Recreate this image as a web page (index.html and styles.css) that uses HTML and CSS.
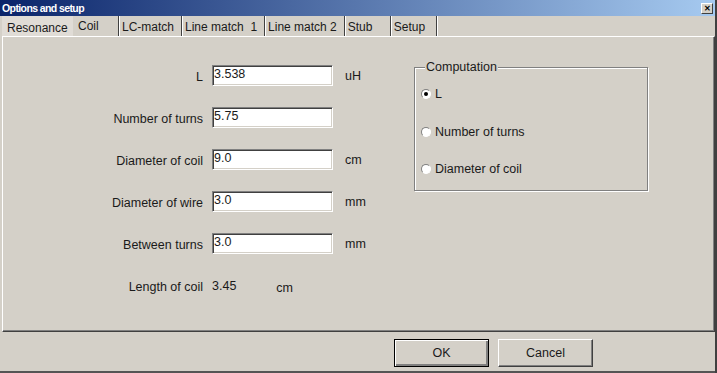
FILE: index.html
```html
<!DOCTYPE html>
<html lang="en">
	<head>
		<meta charset="UTF-8" />
		<title>Options and setup</title>
		<link rel="stylesheet" href="styles.css">
	</head>

	<body>
		<div class="window">
			<div class="titlebar">
				<span class="title">Options and setup</span>
				<span class="close">&#x2715;</span>
			</div>

			<div class="tabs">
				<div class="tab first">Resonance</div>
				<div class="tab active">Coil</div>
				<div class="tab">LC-match</div>
				<div class="tab">Line match&nbsp; 1</div>
				<div class="tab">Line match 2</div>
				<div class="tab">Stub</div>
				<div class="tab">Setup</div>
			</div>

			<div class="panel">
				<div class="form">
					<label class="label">L</label>
					<input class="field" type="text" value="3.538">
					<span class="unit">uH</span>

					<label class="label">Number of turns</label>
					<input class="field" type="text" value="5.75">
					<span class="unit"></span>

					<label class="label">Diameter of coil</label>
					<input class="field" type="text" value="9.0">
					<span class="unit">cm</span>

					<label class="label">Diameter of wire</label>
					<input class="field" type="text" value="3.0">
					<span class="unit">mm</span>

					<label class="label">Between turns</label>
					<input class="field" type="text" value="3.0">
					<span class="unit">mm</span>

					<label class="label">Length of coil</label>
					<div class="result">
						<span class="value">3.45</span>
						<span class="result-unit">cm</span>
					</div>
				</div>

				<fieldset class="group">
					<legend>Computation</legend>
					<div class="option"><span class="radio checked"></span>L</div>
					<div class="option"><span class="radio"></span>Number of turns</div>
					<div class="option"><span class="radio"></span>Diameter of coil</div>
				</fieldset>
			</div>

			<div class="footer">
				<button class="btn default">OK</button>
				<button class="btn">Cancel</button>
			</div>
		</div>
	</body>
</html>
```

FILE: styles.css
```css
    body {
      margin: 0;
      background-color: #d4d0c8;
      font-family: "Liberation Sans", Arial, sans-serif;
      font-size: 12.5px;
      color: #1a1a1a;
    }
    .window {
      width: 717px;
      height: 373px;
      display: flex;
      flex-direction: column;
      box-sizing: border-box;
      border-right: 2px solid #404040;
    }

    /* title bar */
    .titlebar {
      height: 16px;
      display: flex;
      align-items: center;
      justify-content: space-between;
      padding: 0 2px 0 2px;
      background: linear-gradient(to right, #0a246a, #a6caf0);
    }
    .title {
      color: white;
      font-weight: bold;
      font-size: 10.5px;
      letter-spacing: -0.6px;
    }
    .close {
      width: 12px;
      height: 11px;
      display: flex;
      align-items: center;
      justify-content: center;
      box-sizing: border-box;
      background: #d4d0c8;
      border: 1px solid;
      border-color: #fff #404040 #404040 #fff;
      font-size: 8px;
      font-weight: bold;
      color: #000;
    }

    /* tabs */
    .tabs {
      height: 20px;
      display: flex;
      padding-left: 2px;
      font-size: 12px;
    }
    .tab {
      min-width: 46px;
      box-sizing: border-box;
      padding: 4px 7px 0 3px;
      border-right: 1px solid #404040;
      box-shadow: 1px 0 #fff;
      white-space: nowrap;
    }
    .tab.first {
      width: 71px;
      padding-left: 5px;
      padding-top: 5px;
      background: #e0dcd6;
      border-right: none;
      box-shadow: none;
    }
    .tab.active {
      padding-left: 5px;
      padding-top: 3px;
    }

    /* main panel */
    .panel {
      height: 296px;
      box-sizing: border-box;
      margin: 0 0 0 2px;
      border: 1px solid;
      border-color: #fff #404040 #404040 #fff;
      box-shadow: inset -1px -1px #808080;
      display: flex;
      align-items: flex-start;
      padding-top: 28px;
    }
    .form {
      display: grid;
      grid-template-columns: 200px 121px 40px;
      grid-auto-rows: 21px;
      column-gap: 9px;
      row-gap: 21px;
      align-items: center;
    }
    .label {
      text-align: right;
      padding-top: 3px;
    }
    .field {
      width: 121px;
      height: 21px;
      box-sizing: border-box;
      margin: 0;
      padding: 0 1px 4px;
      border: 1px solid;
      border-color: #808080 #fff #fff #808080;
      box-shadow: inset 1px 1px #404040, inset -1px -1px #d4d0c8;
      background: white;
      font-family: inherit;
      font-size: 12.5px;
      color: #1a1a1a;
    }
    .unit {
      margin-left: 3px;
    }
    .result {
      grid-column: span 2;
      display: flex;
      align-items: center;
    }
    .result-unit {
      margin-left: 40px;
      padding-top: 5px;
    }

    /* computation group */
    .group {
      width: 234px;
      height: 131px;
      box-sizing: border-box;
      margin: -5px 0 0 32px;
      padding: 12px 6px 0;
      border: 1px solid #808080;
      box-shadow: 1px 1px #fff, inset 1px 1px #fff;
    }
    .group legend {
      padding: 0 1px;
      margin-left: 4px;
      background: #d4d0c8;
    }
    .option {
      height: 16px;
      display: flex;
      align-items: center;
      margin-bottom: 21.5px;
    }
    .radio {
      width: 10px;
      height: 10px;
      box-sizing: border-box;
      margin-right: 4px;
      border-radius: 50%;
      border: 1px solid;
      border-color: #808080 #fff #fff #808080;
      background: white;
      display: flex;
      align-items: center;
      justify-content: center;
    }
    .radio.checked::after {
      content: "";
      width: 4px;
      height: 4px;
      border-radius: 50%;
      background: #000;
    }

    /* buttons */
    .footer {
      flex: 1;
      display: flex;
      justify-content: flex-end;
      align-items: flex-start;
      gap: 9px;
      padding: 7px 122px 0 0;
      border-bottom: 2px solid #555;
    }
    .btn {
      width: 95px;
      height: 28px;
      box-sizing: border-box;
      background: #d4d0c8;
      border: 1px solid;
      border-color: #fff #404040 #404040 #fff;
      box-shadow: inset -1px -1px #808080;
      font-family: inherit;
      font-size: 12.5px;
      color: #1a1a1a;
    }
    .btn.default {
      border: 1px solid #000;
      box-shadow: inset 1px 1px #fff, inset -2px -2px #808080;
    }
```
